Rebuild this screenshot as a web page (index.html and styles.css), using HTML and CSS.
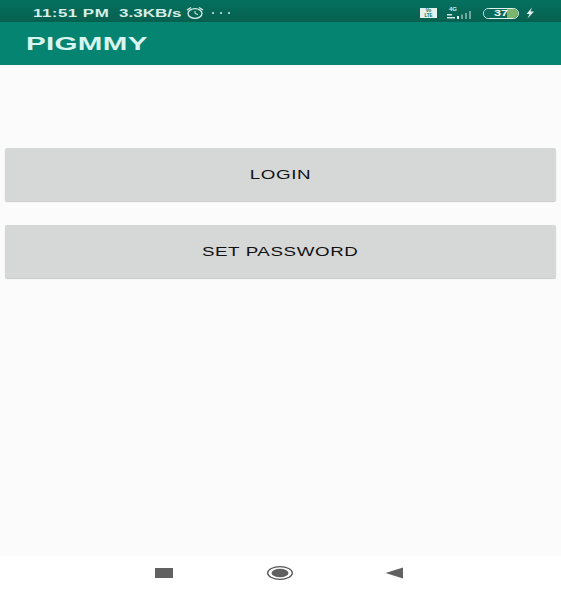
FILE: index.html
```html
<!DOCTYPE html>
<html lang="en">
<head>
<meta charset="utf-8">
<title>PIGMMY</title>
<link rel="stylesheet" href="styles.css">
</head>
<body>
<div class="screen">
  <header class="top">
    <div class="status">
      <div class="status-left">
        <span class="time"><span class="wide">11:51 PM</span></span>
        <span class="speed"><span class="wide">3.3KB/s</span></span>
        <svg class="alarm" width="20" height="14" viewBox="0 0 20 14"><ellipse cx="10" cy="7.500" rx="7" ry="4.800" fill="none" stroke="#d8efe9" stroke-width="1.300"/><path d="M10 5v2.500l3 1" fill="none" stroke="#d8efe9" stroke-width="1"/><path d="M2 4L6 1.500M18 4L14 1.500" stroke="#d8efe9" stroke-width="1.400"/></svg>
        <span class="dots">
          <i class="dot"></i><i class="dot"></i><i class="dot"></i>
        </span>
      </div>
      <div class="status-right">
        <span class="volte"><span class="volte-text">Vo<br>LTE</span></span>
        <svg class="signal" width="30" height="16" viewBox="0 0 30 16">
          <text x="3" y="6" class="net">4G</text>
          <rect x="1" y="9" width="5" height="1.500" fill="#cfe6e0"/>
          <rect x="1" y="12" width="8" height="1.500" fill="#cfe6e0"/>
          <rect x="11" y="11" width="2" height="3" fill="#e4f2ee"/>
          <rect x="15" y="9.500" width="2" height="4.500" fill="#6ea89c"/>
          <rect x="19" y="8" width="2" height="6" fill="#6ea89c"/>
          <rect x="23" y="6" width="2" height="8" fill="#6ea89c"/>
        </svg>
        <span class="battery"><span class="battery-level"></span><span class="battery-text">37</span></span>
        <svg class="bolt" width="10" height="12" viewBox="0 0 10 12"><path d="M7 0.500L1.500 7H4.500L2.500 11.500L9 4.500H5.500Z" fill="#e4f2ee"/></svg>
      </div>
    </div>
    <div class="appbar"><span class="appbar-title">PIGMMY</span></div>
  </header>
  <main class="content">
    <div class="btn"><span class="wide btn-label">LOGIN</span></div>
    <div class="btn"><span class="wide btn-label">SET PASSWORD</span></div>
  </main>
  <nav class="navbar">
    <span class="nav-square"></span>
    <svg width="26" height="14" viewBox="0 0 26 14"><ellipse cx="13" cy="7" rx="12.300" ry="6.300" fill="none" stroke="#555" stroke-width="1.300"/><ellipse cx="13" cy="7" rx="8.500" ry="4.300" fill="#616161"/></svg>
    <svg width="18" height="12" viewBox="0 0 18 12"><path d="M0.500 6L18 0.500V11.500Z" fill="#616161"/></svg>
  </nav>
</div>
</body>
</html>
```

FILE: styles.css
```css
* { box-sizing: border-box; }
html, body { margin: 0; padding: 0; }
body { font-family: "Liberation Sans", Arial, sans-serif; background: #fbfbfb; }
.screen { width: 561px; height: 592px; display: flex; flex-direction: column; overflow: hidden; }
.top { flex: none; }
.wide { display: inline-block; transform: scaleX(1.540); }
.status {
  height: 22px;
  background: linear-gradient(180deg, #04705f, #07604f);
  display: flex;
  justify-content: space-between;
  align-items: center;
  padding: 4px 26px 0 33px;
  color: #d8efe9;
}
.status-left, .status-right { display: flex; align-items: center; }
.time { width: 76px; font-size: 11px; font-weight: 700; letter-spacing: 0.300px; }
.time .wide, .speed .wide { transform-origin: left center; }
.speed { width: 62px; margin-left: 10px; font-size: 10px; font-weight: 700; }
.speed .wide { transform: scaleX(1.700); }
.alarm { margin-left: 4px; }
.dots { display: flex; gap: 6px; margin-left: 7px; }
.dot { width: 2px; height: 2px; background: #d8efe9; border-radius: 50%; display: block; }
.volte {
  width: 17px; height: 10px; background: #e4f2ee; color: #036a5c;
  font-size: 4.500px; font-weight: 700; line-height: 5px; text-align: center; overflow: hidden;
}
.volte-text { display: block; }
.signal { margin-left: 9px; }
.net { font-size: 6px; font-weight: 700; fill: #d8efe9; font-family: "Liberation Sans", sans-serif; }
.battery {
  position: relative; width: 36px; height: 11px; margin-left: 7px;
  border: 1px solid #e4f2ee; border-radius: 6px; overflow: hidden;
  display: flex; align-items: center; justify-content: center;
}
.battery-level { position: absolute; left: 0; top: 0; bottom: 0; width: 100%; background: linear-gradient(90deg, #0a6b5b 0 68%, #7cb66e 68%); }
.battery-text { position: relative; font-size: 9px; font-weight: 700; color: #f0f8f5; transform: scaleX(1.400); }
.bolt { margin-left: 6px; }
.appbar {
  height: 43px;
  background: #058472;
  color: #d9f5ef;
  font-size: 18px;
  font-weight: 700;
  display: flex;
  align-items: center;
  padding: 1px 0 0 26px;
}
.appbar-title { display: inline-block; transform: scaleX(1.640); transform-origin: left center; letter-spacing: 0.200px; }
.content { flex: 1; display: flex; flex-direction: column; gap: 24px; padding: 83px 5px 0; }
.btn {
  height: 53px;
  background: #d6d8d7;
  border-radius: 2px;
  box-shadow: 0 1px 1px #c8c9c9;
  color: #111;
  font-size: 12.500px;
  letter-spacing: 0.400px;
  display: flex;
  align-items: center;
  justify-content: center;
}
.btn-label { transform: scaleX(1.500); }
.navbar {
  flex: none;
  height: 36px;
  background: #fff;
  display: flex;
  align-items: center;
  padding: 0 0 2px 155px;
  gap: 92px;
}
.nav-square { width: 18px; height: 10px; margin-right: 2px; background: #616161; display: block; }
```
